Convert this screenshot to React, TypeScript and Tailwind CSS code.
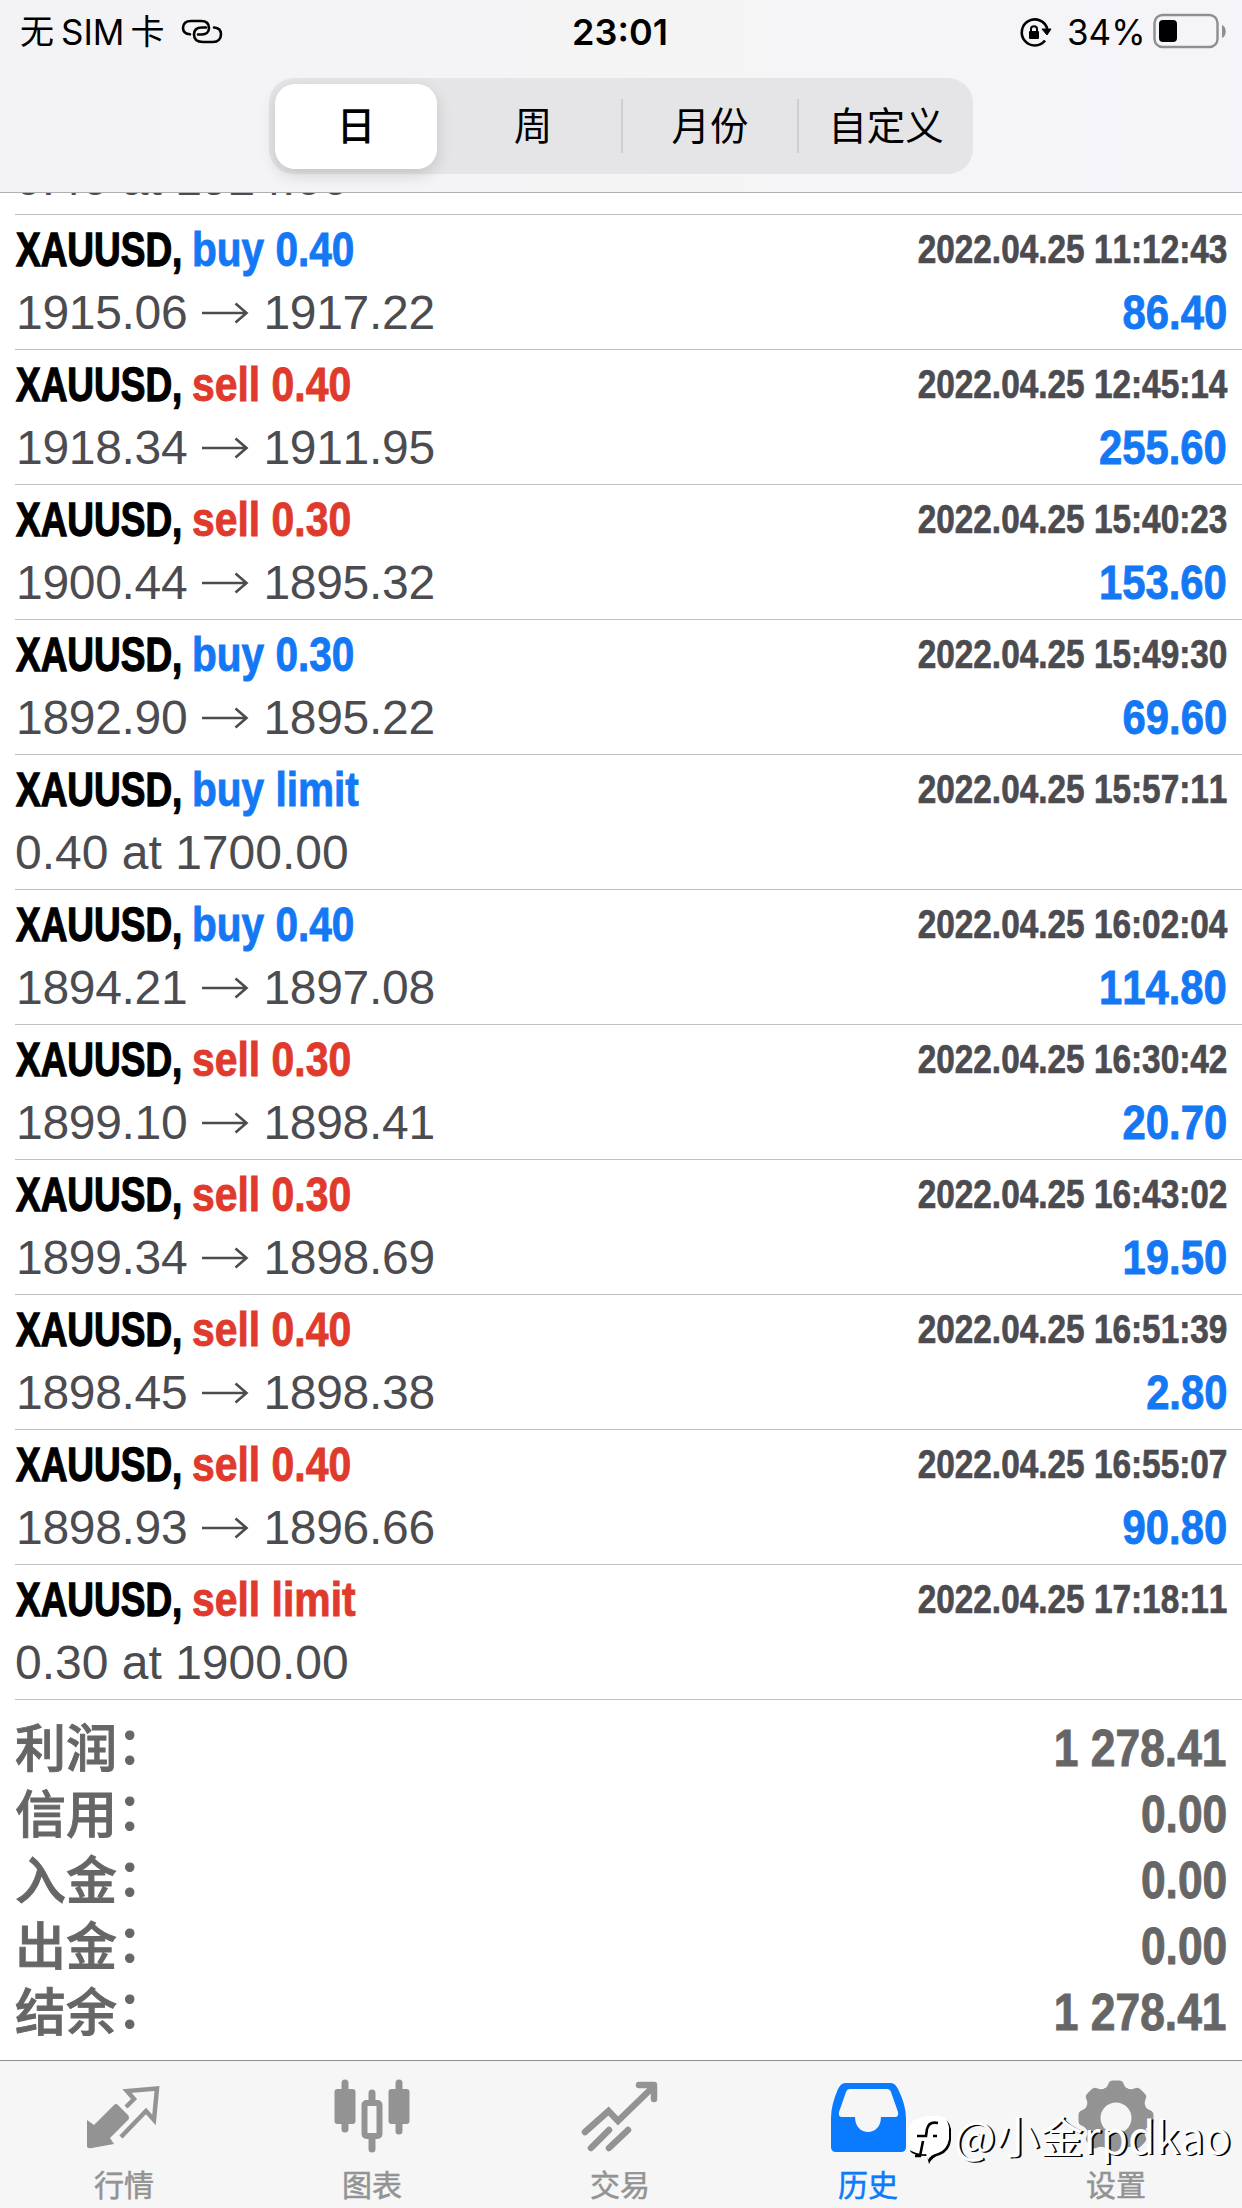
import React from "react";

type Deal = {
  side: "buy" | "sell";
  size: string;
  from?: string;
  to?: string;
  note?: string;
  time: string;
  profit?: string;
};

const deals: Deal[] = [
  { side: "buy", size: "0.40", from: "1915.06", to: "1917.22", time: "2022.04.25 11:12:43", profit: "86.40" },
  { side: "sell", size: "0.40", from: "1918.34", to: "1911.95", time: "2022.04.25 12:45:14", profit: "255.60" },
  { side: "sell", size: "0.30", from: "1900.44", to: "1895.32", time: "2022.04.25 15:40:23", profit: "153.60" },
  { side: "buy", size: "0.30", from: "1892.90", to: "1895.22", time: "2022.04.25 15:49:30", profit: "69.60" },
  { side: "buy", size: "limit", note: "0.40 at 1700.00", time: "2022.04.25 15:57:11" },
  { side: "buy", size: "0.40", from: "1894.21", to: "1897.08", time: "2022.04.25 16:02:04", profit: "114.80" },
  { side: "sell", size: "0.30", from: "1899.10", to: "1898.41", time: "2022.04.25 16:30:42", profit: "20.70" },
  { side: "sell", size: "0.30", from: "1899.34", to: "1898.69", time: "2022.04.25 16:43:02", profit: "19.50" },
  { side: "sell", size: "0.40", from: "1898.45", to: "1898.38", time: "2022.04.25 16:51:39", profit: "2.80" },
  { side: "sell", size: "0.40", from: "1898.93", to: "1896.66", time: "2022.04.25 16:55:07", profit: "90.80" },
  { side: "sell", size: "limit", note: "0.30 at 1900.00", time: "2022.04.25 17:18:11" },
];

const totals = [
  ["利润", "1 278.41"],
  ["信用", "0.00"],
  ["入金", "0.00"],
  ["出金", "0.00"],
  ["结余", "1 278.41"],
];

function StatusBar() {
  return (
    <div className="grid h-[64px] grid-cols-3 items-center pl-[20px] pr-[16px] font-['Inter','Noto_Sans_CJK_SC',sans-serif] text-[35px] leading-[64px] text-black">
      <div className="flex items-center whitespace-nowrap">
        <span className="text-[34px]">无</span>
        <span className="ml-[7px]">SIM</span>
        <span className="ml-[6px] text-[34px]">卡</span>
        <svg className="ml-[17px]" width="42" height="28" viewBox="0 0 42 28" fill="none" stroke="black" strokeWidth="2.6" strokeLinecap="round">
          <path d="M9 16.3 C4 16 2 13 2 10 C2 5.500 5 3 10 3 H20 C25 3 28 5.500 28 10 C28 14 25 16.500 21 16.500 H17" />
          <path d="M33 9.500 C38 10 40 13 40 16 C40 21 37 24 32 24 H22 C16 24 13 21 13 16.500 C13 12 16 9.500 21 9.500 H25" />
        </svg>
      </div>
      <div className="pr-[6px] text-center text-[36px] font-semibold">23:01</div>
      <div className="flex items-center justify-end">
        <svg width="34" height="32" viewBox="0 0 34 32" fill="none" stroke="black">
          <path d="M26 24.500 A13 13 0 1 1 28.300 13" strokeWidth="2.600" />
          <path d="M23 13 H32 L28 19 Z" fill="black" strokeWidth="1" />
          <rect x="10" y="15" width="10" height="8" rx="1" fill="black" stroke="none" />
          <path d="M12 16 V13 C12 9.300 18 9.300 18 13 V16" strokeWidth="2" />
        </svg>
        <span className="ml-[14px] w-[77px] whitespace-nowrap text-[35px]">34%</span>
        <svg className="ml-[8px] mt-[-2px]" width="74" height="36" viewBox="0 0 74 36">
          <rect x="2.500" y="2" width="63" height="32" rx="8" fill="none" stroke="#8e8e93" strokeWidth="2.400" />
          <rect x="7" y="7" width="18" height="22" rx="4" fill="black" />
          <path d="M70 12 C75 14 75 23 70 25 Z" fill="#8e8e93" />
        </svg>
      </div>
    </div>
  );
}

function PeriodPicker() {
  return (
    <div className="mx-auto mt-[14px] grid h-[96px] w-[704px] grid-cols-4 items-center rounded-[25px] bg-[#e5e5e7] font-['Noto_Sans_CJK_SC',sans-serif] text-[38.500px] text-black">
      <div className="ml-[6px] flex h-[85px] w-[162px] items-center justify-center rounded-[20px] bg-white pb-[5px] font-medium shadow-[0_6px_16px_rgba(0,0,0,0.14)]">
        日
      </div>
      <div className="flex h-[54px] items-center justify-center pb-[5px]">周</div>
      <div className="flex h-[54px] items-center justify-center border-l-[2px] border-[#cfcfd2] pb-[5px]">月份</div>
      <div className="flex h-[54px] items-center justify-center border-l-[2px] border-[#cfcfd2] pb-[5px]">自定义</div>
    </div>
  );
}

function Arrow() {
  return (
    <svg className="ml-[14px] mr-[13px]" width="48" height="24" viewBox="0 0 48 24" fill="none" stroke="#4c4c50" strokeWidth="2.600">
      <path d="M1 12 H45.500 M34.500 2.500 L45.500 12 L34.500 21.500" />
    </svg>
  );
}

function DealRow({ deal }: { deal: Deal }) {
  return (
    <li className="ml-[15px] h-[135px] border-t border-[#c0c0c3] pr-[15px] text-[48px]">
      <div className="flex h-[70px] items-center font-bold leading-[70px]">
        <span className="ml-[1px] w-[176px] origin-left scale-x-[0.77] whitespace-nowrap text-black [-webkit-text-stroke:1.3px_currentColor]">XAUUSD,</span>
        {deal.side === "buy" ? (
          <span className="origin-left scale-x-[0.845] whitespace-nowrap text-[#1478f5] [-webkit-text-stroke:0.9px_currentColor]">buy {deal.size}</span>
        ) : (
          <span className="origin-left scale-x-[0.852] whitespace-nowrap text-[#e03a2d] [-webkit-text-stroke:0.9px_currentColor]">sell {deal.size}</span>
        )}
        <time className="-mt-[3px] ml-auto origin-right scale-x-[0.834] whitespace-nowrap text-[40px] text-[#4c4c50] [-webkit-text-stroke:0.7px_currentColor]">
          {deal.time}
        </time>
      </div>
      <div className="flex h-[56px] items-center leading-[56px] text-[#4c4c50]">
        {deal.note ? (
          <span>{deal.note}</span>
        ) : (
          <>
            <span className="ml-[1px] tracking-[-0.3px]">{deal.from}</span>
            <Arrow />
            <span className="ml-[1px] tracking-[-0.3px]">{deal.to}</span>
          </>
        )}
        <span className="ml-auto origin-right scale-x-[0.87] font-bold text-[#1478f5] [-webkit-text-stroke:0.9px_currentColor]">{deal.profit}</span>
      </div>
    </li>
  );
}

function Tab({ label, active, children }: { label: string; active?: boolean; children: React.ReactNode }) {
  return (
    <div className={active ? "flex flex-col items-center text-[#0a7aff]" : "flex flex-col items-center text-[#939393]"}>
      <svg className="mt-[17px]" width="80" height="80" viewBox="0 0 80 80" fill="none" stroke="currentColor">
        {children}
      </svg>
      <span className="mt-[5px] font-['Noto_Sans_CJK_SC',sans-serif] text-[30px] leading-[40px] [-webkit-text-stroke:0.5px_currentColor]">{label}</span>
    </div>
  );
}

const toothAngles = [0, 45, 90, 135, 180, 225, 270, 315];

function TabBar() {
  return (
    <nav className="relative grid h-[148px] grid-cols-5 border-t border-[#8e8e8e] bg-[#f6f6f6] pr-[2px]">
      <Tab label="行情">
        <path d="M3 42 L10 47 L30 27 Q32 25 34 27 L44 37 Q46 40 44 42 L26 60 L30 66 L8 70 Q3 71 3 68 Z" fill="currentColor" stroke="none" />
        <path d="M42 29 L50 21 L43 13 L73 10.500 L70 42 L62 33 L37 59" strokeWidth="4.500" />
      </Tab>
      <Tab label="图表">
        <path d="M13 5 V51 M67 5 V53 M40 15 V24 M40 62 V71" strokeWidth="7" strokeLinecap="round" />
        <rect x="2.500" y="11" width="21" height="35" rx="3" fill="currentColor" stroke="none" />
        <rect x="56.500" y="11" width="21" height="35" rx="3" fill="currentColor" stroke="none" />
        <rect x="32.500" y="25" width="15" height="33" rx="2" strokeWidth="6" />
      </Tab>
      <Tab label="交易">
        <path d="M5 54 L28.500 33 L38 43 L73 9" strokeWidth="6.500" strokeLinecap="round" />
        <path d="M59 7 H74 V21" strokeWidth="6.500" strokeLinecap="round" strokeLinejoin="round" />
        <path d="M11 70 L29 52 M29 70 L48 52" strokeWidth="6.500" strokeLinecap="round" />
      </Tab>
      <Tab label="历史" active>
        <path
          d="M17 5 H63 Q67 5 70 11 Q78 27 78 40 V69 Q78 74 73 74 H8 Q3 74 3 69 V40 Q3 27 10 11 Q13 5 17 5 Z M22 11 Q19 11 18 14 L11 34 Q10 39 14 39 H27 C27 59 53 59 53 39 H67 Q71 39 70 34 L63 14 Q62 11 59 11 Z"
          fill="currentColor"
          fillRule="evenodd"
          stroke="none"
        />
      </Tab>
      <Tab label="设置">
        <circle cx="40" cy="40" r="23.500" strokeWidth="16" />
        {toothAngles.map((angle) => (
          <path
            key={angle}
            d="M26 12 Q31 10 32.500 5.500 Q33.500 2.500 37 2.500 H43 Q46.500 2.500 47.500 5.500 Q49 10 54 12 L48 20 H32 Z"
            transform={`rotate(${angle} 40 40)`}
            fill="currentColor"
            stroke="none"
          />
        ))}
      </Tab>
      <div className="absolute left-[907px] top-[48px] flex items-center whitespace-nowrap text-white">
        <svg width="46" height="60" viewBox="0 0 46 60">
          <path d="M15 9 H31 Q42 9 44 20 V31 Q43 42 33 46 Q25 48 22 55 L20 47 Q6 47 3 42 Z" fill="black" />
          <path d="M13 9 Q16 7 22 7 H32 Q40 7 42 18 V30 Q40 41 31 44 Q23 46 21 51 L19 45 Q10 46 1 40 L1 20 Q4 10 13 9" fill="white" />
          <path d="M31 14 Q22 12 20 20 L19 27 H10 M16 32 L13 47 H8 M26 27 H30" fill="none" stroke="black" strokeWidth="2.600" />
        </svg>
        <span className="-mt-[9px] ml-[1px] font-['Noto_Sans_CJK_SC',sans-serif] text-[44px] leading-[50px] [text-shadow:2px_1px_0_#000]">@小金rpdkao</span>
      </div>
    </nav>
  );
}

export default function App() {
  return (
    <div className="flex h-[2208px] w-[1242px] flex-col overflow-hidden bg-white font-['Liberation_Sans',Arial,sans-serif] [font-kerning:none]">
      <header className="h-[193px] shrink-0 border-b border-[#b0b0b2] bg-linear-to-r from-[#f3f3f5] via-[#f5f4f5] to-[#f5f5f9]">
        <StatusBar />
        <PeriodPicker />
      </header>
      <div className="flex h-[21px] shrink-0 flex-col justify-end overflow-hidden">
        <div className="h-[56px] shrink-0 pl-[15px] text-[48px] leading-[56px] text-[#4c4c50]">0.40 at 1924.00</div>
        <div className="h-[7px] shrink-0" />
      </div>
      <ul>
        {deals.map((deal) => (
          <DealRow key={deal.time} deal={deal} />
        ))}
      </ul>
      <dl className="ml-[15px] flex flex-1 flex-col border-t border-[#c0c0c3] pr-[15px] pt-[16px] font-bold text-[#666]">
        {totals.map(([label, value]) => (
          <div key={label} className="flex h-[66px] items-center justify-between leading-[66px]">
            <dt className="-mt-[8px] flex font-['Noto_Sans_CJK_SC',sans-serif] text-[51px] font-medium [-webkit-text-stroke:0.9px_currentColor]">
              <span>{label}</span>
              <span className="-mt-[3px]">：</span>
            </dt>
            <dd className="origin-right scale-x-[0.87] text-[51px] [-webkit-text-stroke:0.9px_currentColor]">{value}</dd>
          </div>
        ))}
      </dl>
      <TabBar />
    </div>
  );
}
